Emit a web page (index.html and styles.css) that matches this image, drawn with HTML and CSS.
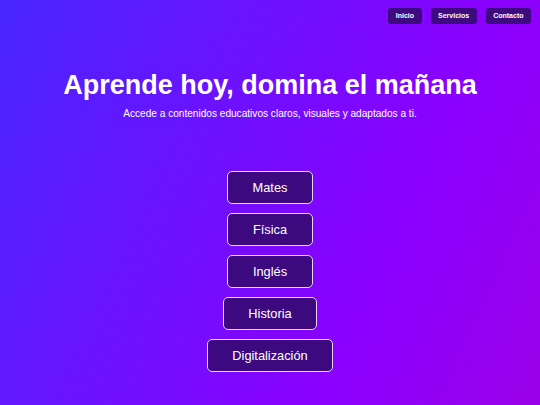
FILE: index.html
```html
<!DOCTYPE html>
<html lang="es">
<head>
	<meta charset="utf-8">
	<title>Aprende hoy</title>
	<link rel="stylesheet" href="styles.css">
</head>
<body>
	<!-- menú -->
	<nav class="nav">
		<a class="nav-btn" href="#">Inicio</a>
		<a class="nav-btn" href="#">Servicios</a>
		<a class="nav-btn" href="#">Contacto</a>
	</nav>

	<!-- cabecera -->
	<header class="hero">
		<h1>Aprende hoy, domina el mañana</h1>
		<p>Accede a contenidos educativos claros, visuales y adaptados a ti.</p>
	</header>

	<!-- asignaturas -->
	<div class="subjects">
		<a class="subject" href="#">Mates</a>
		<a class="subject" href="#">Física</a>
		<a class="subject" href="#">Inglés</a>
		<a class="subject" href="#">Historia</a>
		<a class="subject" href="#">Digitalización</a>
	</div>
</body>
</html>
```

FILE: styles.css
```css
*{
	margin: 0;
	padding: 0;
	box-sizing: border-box;
}
html,body{
	height: 100%;
}
body{
	font-family: "Liberation Sans", Arial, sans-serif;
	color: #fff;
	background: linear-gradient(115deg, #4826ff 0%, #6f10ff 40%, #8b00ff 70%, #9a00e8 100%);
	overflow: hidden;
}
a{
	color: #fff;
	text-decoration: none;
}

.nav{
	display: flex;
	justify-content: flex-end;
	gap: 9px;
	padding: 8px 9px 0 0;
}
.nav-btn{
	display: block;
	height: 16px;
	line-height: 16px;
	padding: 0 7.5px;
	font-size: 7px;
	font-weight: bold;
	background: #3d0a80;
	border-radius: 3px;
}

.hero{
	text-align: center;
	margin-top: 46px;
}
.hero h1{
	font-size: 27px;
	line-height: 31px;
	font-weight: bold;
}
.hero p{
	margin-top: 7px;
	font-size: 10.1px;
	line-height: 12px;
	color: #fff;
}

.subjects{
	display: flex;
	flex-direction: column;
	align-items: center;
	gap: 9px;
	margin-top: 51px;
}
.subject{
	display: block;
	height: 33px;
	line-height: 31px;
	padding: 0 24.5px;
	font-size: 12.8px;
	background: #3c0a7e;
	border: 1.5px solid #ecd2ff;
	border-radius: 5px;
}
```
